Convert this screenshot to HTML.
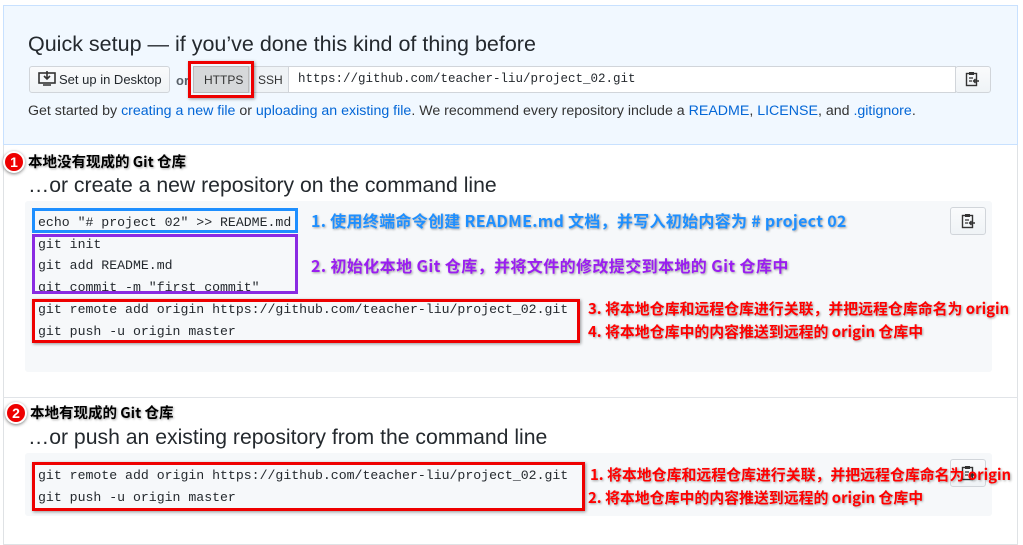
<!DOCTYPE html>
<html><head><meta charset="utf-8"><style>
*{box-sizing:border-box;margin:0;padding:0}
body{width:1023px;height:536px;background:#fff;position:relative;overflow:hidden;font-family:"Liberation Sans","Noto Sans CJK SC",sans-serif;color:#24292e}
.a{position:absolute;white-space:nowrap}
.mono{font-family:"Liberation Mono","DejaVu Sans Mono",monospace;font-size:13.2px;color:#24292e}
.btn{position:absolute;background:linear-gradient(#fafbfc,#eff3f6);border:1px solid #d1d5da;border-radius:3px}
.cn{font-family:"Noto Sans CJK SC",sans-serif;font-weight:bold;font-size:15px;text-shadow:1px 1px 2px rgba(0,0,0,.35)}
.badge{position:absolute;width:22px;height:22px;border-radius:50%;background:#e00;border:2px solid #fff;box-shadow:0 1px 3px rgba(0,0,0,.5);color:#fff;font-weight:bold;font-size:14px;text-align:center;line-height:18px}
a{color:#0366d6;text-decoration:none}
.r{color:#f00;font-size:14.9px;letter-spacing:0}
</style></head><body>
<svg width="0" height="0" style="position:absolute"><defs><g id="clip"><rect x="1.5" y="2.5" width="10" height="12" fill="none" stroke="#333" stroke-width="1.4"/><rect x="4" y="1" width="5" height="3" fill="#333"/><path d="M4 7h4M4 10h3" stroke="#333" stroke-width="1.3"/><path d="M14 10H8.5M10.5 8l-2 2 2 2" stroke="#333" stroke-width="1.4" fill="none"/></g></defs></svg>
<div class="a" style="left:3px;top:5px;width:1015px;height:540px;border:1px solid #dfe2e5"></div>
<div class="a" style="left:3px;top:5px;width:1015px;height:140px;background:#f1f8ff;border:1px solid #c8e1ff"></div>
<div class="a" style="left:28px;top:32px;font-size:21.5px">Quick setup — if you’ve done this kind of thing before</div>
<div class="btn" style="left:29px;top:66px;width:141px;height:27px"></div>
<svg class="a" style="left:38px;top:71px" width="18" height="16" viewBox="0 0 18 16"><rect x="1" y="2" width="16" height="10" fill="none" stroke="#333" stroke-width="1.6"/><path d="M9 0v8M6 5l3 3 3-3M5 14h8" stroke="#333" stroke-width="1.6" fill="none"/></svg>
<div class="a" style="left:59px;top:72px;font-size:13px;color:#24292e">Set up in Desktop</div>
<div class="a" style="left:176px;top:73px;font-size:13px;font-weight:bold;color:#586069">or</div>
<div class="a" style="left:193px;top:66px;width:56px;height:27px;background:#d6d8da;border:1px solid #bbb"></div>
<div class="a" style="left:204px;top:73px;font-size:12px;color:#333">HTTPS</div>
<div class="a" style="left:249px;top:66px;width:40px;height:27px;background:#eff3f6;border:1px solid #d1d5da"></div>
<div class="a" style="left:258px;top:73px;font-size:12px;color:#333">SSH</div>
<div class="a" style="left:188px;top:61px;width:66px;height:37px;border:3px solid #e00;box-shadow:1px 1px 3px rgba(0,0,0,.4)"></div>
<div class="a" style="left:288px;top:66px;width:668px;height:27px;background:#fff;border:1px solid #d1d5da"></div>
<div class="a mono" style="left:298px;top:72px;font-size:12.5px">https://github.com/teacher-liu/project_02.git</div>
<div class="btn" style="left:955px;top:66px;width:36px;height:27px"></div>
<svg class="a" style="left:965px;top:71px" width="16" height="16"><use href="#clip"/></svg>
<div class="a" style="left:28px;top:103px;font-size:14.2px;color:#333">Get started by <a>creating a new file</a> or <a>uploading an existing file</a>. We recommend every repository include a <a>README</a>, <a>LICENSE</a>, and <a>.gitignore</a>.</div>

<div class="badge" style="left:3px;top:151px">1</div>
<div class="a cn" style="left:28px;top:151px;color:#000;font-size:14.5px">本地没有现成的 Git 仓库</div>
<div class="a" style="left:28px;top:174px;font-size:21.2px">…or create a new repository on the command line</div>
<div class="a" style="left:25px;top:201px;width:967px;height:171px;background:#f6f8fa;border-radius:3px"></div>
<div class="btn" style="left:950px;top:207px;width:36px;height:28px"></div>
<svg class="a" style="left:961px;top:213px" width="16" height="16"><use href="#clip"/></svg>
<div class="a mono" style="left:38px;top:212px;line-height:21.7px">echo "# project 02" &gt;&gt; README.md<br>git init<br>git add README.md<br>git commit -m "first commit"<br>git remote add origin https://github.com/teacher-liu/project_02.git<br>git push -u origin master</div>
<div class="a" style="left:32px;top:208px;width:266px;height:25px;border:3px solid #1e8fff"></div>
<div class="a" style="left:32px;top:234px;width:266px;height:60px;border:3px solid #8a2be2"></div>
<div class="a" style="left:32px;top:299px;width:548px;height:44px;border:3px solid #e00;box-shadow:1px 1px 3px rgba(0,0,0,.4)"></div>
<div class="a cn" style="left:311px;top:208px;color:#1e8fff;font-size:16px;letter-spacing:0.3px">1. 使用终端命令创建 README.md 文档，并写入初始内容为 # project 02</div>
<div class="a cn" style="left:311px;top:253px;color:#9a1ef0;font-size:16px;letter-spacing:0.4px">2. 初始化本地 Git 仓库，并将文件的修改提交到本地的 Git 仓库中</div>
<div class="a cn r" style="left:588px;top:298px">3. 将本地仓库和远程仓库进行关联，并把远程仓库命名为 origin</div>
<div class="a cn r" style="left:588px;top:321px">4. 将本地仓库中的内容推送到远程的 origin 仓库中</div>

<div class="a" style="left:3px;top:397px;width:1015px;height:1px;background:#e1e4e8"></div>
<div class="badge" style="left:5px;top:402px">2</div>
<div class="a cn" style="left:30px;top:402px;color:#000;font-size:14.5px">本地有现成的 Git 仓库</div>
<div class="a" style="left:28px;top:426px;font-size:21.2px">…or push an existing repository from the command line</div>
<div class="a" style="left:25px;top:453px;width:967px;height:63px;background:#f6f8fa;border-radius:3px"></div>
<div class="btn" style="left:950px;top:459px;width:36px;height:28px"></div>
<svg class="a" style="left:961px;top:465px" width="16" height="16"><use href="#clip"/></svg>
<div class="a mono" style="left:38px;top:465px;line-height:21.7px">git remote add origin https://github.com/teacher-liu/project_02.git<br>git push -u origin master</div>
<div class="a" style="left:32px;top:462px;width:553px;height:49px;border:3px solid #e00;box-shadow:1px 1px 3px rgba(0,0,0,.4)"></div>
<div class="a cn r" style="left:590px;top:464px">1. 将本地仓库和远程仓库进行关联，并把远程仓库命名为 origin</div>
<div class="a cn r" style="left:588px;top:487px">2. 将本地仓库中的内容推送到远程的 origin 仓库中</div>
</body></html>
